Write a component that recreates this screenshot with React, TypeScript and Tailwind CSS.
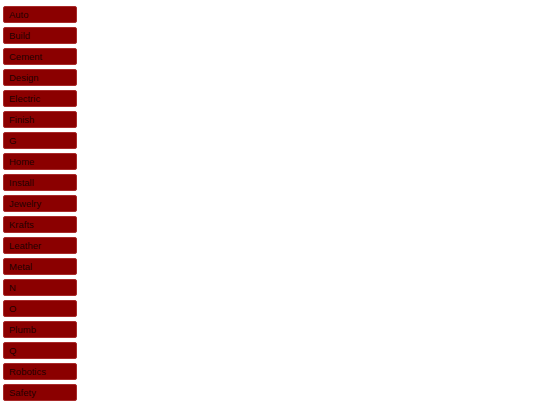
const items = [
  "Auto",
  "Build",
  "Cement",
  "Design",
  "Electric",
  "Finish",
  "G",
  "Home",
  "Install",
  "Jewelry",
  "Krafts",
  "Leather",
  "Metal",
  "N",
  "O",
  "Plumb",
  "Q",
  "Robotics",
  "Safety",
];

export default function App() {
  return (
    <div className="flex flex-col items-start gap-[4px] pt-[6px] pl-[3px] font-['Liberation_Sans',Arial,sans-serif]">
      {items.map((label) => (
        <button
          key={label}
          className="h-[17px] w-[74px] rounded-[2px] border border-[#a82a2a] bg-[#8b0000] pl-[5px] text-left text-[9.5px] leading-[15px] text-[#250000]"
        >
          {label}
        </button>
      ))}
    </div>
  );
}
